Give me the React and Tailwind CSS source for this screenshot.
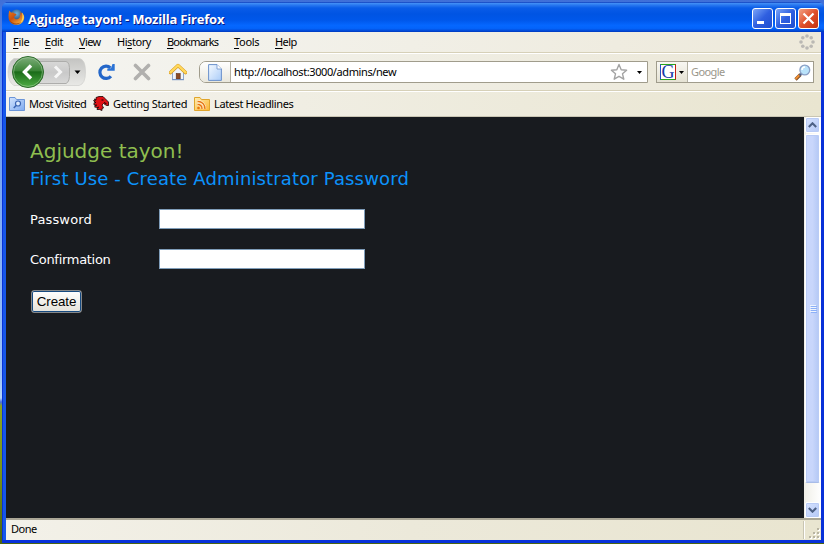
import React from "react";

const UI = "font-['Noto_Sans',sans-serif]";
const VERDANA = "font-['DejaVu_Sans',sans-serif]";

function FirefoxLogo() {
  return (
    <svg width="17" height="17" viewBox="0 0 17 17">
      <defs>
        <radialGradient id="globe" cx=".5" cy=".3" r=".6">
          <stop offset="0" stopColor="#6db4de" />
          <stop offset="1" stopColor="#1a3468" />
        </radialGradient>
        <linearGradient id="fox" x1="0" y1="0" x2=".8" y2="1">
          <stop offset="0" stopColor="#e57d1c" />
          <stop offset=".45" stopColor="#c9500f" />
          <stop offset="1" stopColor="#fbb83a" />
        </linearGradient>
      </defs>
      <circle cx="8.6" cy="7.4" r="6.8" fill="url(#globe)" />
      <path d="M1.200 1.600L3.200 3.800C4.600 3 5.500 3.600 6.400 4.400L8.600 5L7.200 7L6.200 7.400C5.800 9.400 7.400 10.600 9.400 10.200C11.600 9.800 12.400 7.800 11.600 5.800L12.600 6L12 3.400C13.600 3.600 14.600 4.400 15 5.200C16.400 7 16.400 8.400 16 10C15.200 13.600 12.400 15.800 8.400 15.800C4 15.800 .8 12.600 .6 8.400C.4 5.600 .9 3.600 1.200 1.600Z" fill="url(#fox)" />
      <path d="M14 3.600C17 7 16.400 11.400 12.600 13.800C14.400 11 15 7.400 14 3.600Z" fill="#fdd860" />
      <path d="M1.400 11C4 14.600 9.600 15.600 13 13C11 16.600 3.400 16.600 1.400 11Z" fill="#86300f" opacity=".7" />
    </svg>
  );
}

function CaptionButton({ kind }) {
  const tone =
    kind === "close"
      ? "from-[#f0a083] via-[#e0502c] to-[#c2320f]"
      : "from-[#7da4f7] via-[#2f5fe0] to-[#1f4ed0]";
  return (
    <div className={`flex h-[21px] w-[21px] items-center justify-center rounded-[3px] border border-white bg-linear-to-br ${tone}`}>
      <svg width="19" height="19" viewBox="0 0 19 19">
        {kind === "min" && <rect x="4" y="12" width="7" height="3" fill="#fff" />}
        {kind === "max" && (
          <path fillRule="evenodd" fill="#fff" d="M4 4H15V15H4Z M5 7V14H14V7Z" />
        )}
        {kind === "close" && (
          <path d="M4.500 4.500L14.500 14.500M14.500 4.500L4.500 14.500" stroke="#fff" strokeWidth="2.2" />
        )}
      </svg>
    </div>
  );
}

function TitleBar() {
  return (
    <div className="flex h-[30px] shrink-0 items-center rounded-t-[6px] bg-[linear-gradient(180deg,#0b36b4_0%,#3f8cf5_5%,#2a79f0_10%,#0a5ce8_20%,#0054e3_40%,#0057ea_60%,#0567ff_78%,#0464fb_88%,#0146d2_97%,#0036b8_100%)] pr-[5px] pl-[6px]">
      <div className="flex h-[30px] w-5 items-center">
        <FirefoxLogo />
      </div>
      <span className="pt-[3px] font-['Open_Sans',sans-serif] text-[13px] leading-[18px] font-bold tracking-[-0.2px] whitespace-nowrap text-white [text-shadow:1px_1px_0_#0a1883]">
        Agjudge tayon! - Mozilla Firefox
      </span>
      <div className="ml-auto flex gap-[2px] pt-[3px]">
        <CaptionButton kind="min" />
        <CaptionButton kind="max" />
        <CaptionButton kind="close" />
      </div>
    </div>
  );
}

const menus = [
  ["", "F", "ile", "w-8 tracking-[-0.3px]"],
  ["", "E", "dit", "w-[34px] tracking-[-0.4px]"],
  ["", "V", "iew", "w-[38px] tracking-[-0.6px]"],
  ["Hi", "s", "tory", "w-[50px] tracking-[-0.45px]"],
  ["", "B", "ookmarks", "w-[67px] tracking-[-0.8px]"],
  ["", "T", "ools", "w-[41px] tracking-[-0.3px]"],
  ["", "H", "elp", "w-[40px] tracking-[-0.6px]"],
];

const throbberDots = [
  [8, 2], [12.2, 3.8], [14, 8], [12.2, 12.2], [8, 14], [3.8, 12.2], [2, 8], [3.8, 3.8],
];

function MenuBar() {
  return (
    <div className="flex h-[21px] shrink-0 items-center border-b border-[#d6d0b8] bg-linear-to-r from-[#f5f5f2] to-[#ede9da] pl-[7px]">
      {menus.map(([before, key, after, style]) => (
        <div key={key + after} className={`${style} shrink-0 text-[11px] leading-[20px] whitespace-nowrap text-black`}>
          {before}
          <span className="underline underline-offset-2">{key}</span>
          {after}
        </div>
      ))}
      <svg className="mr-[6px] ml-auto" width="16" height="16" viewBox="0 0 16 16">
        {throbberDots.map(([x, y]) => (
          <circle key={`${x}-${y}`} cx={x} cy={y} r="1.8" fill="#bab8b4" />
        ))}
      </svg>
    </div>
  );
}

function BackForward() {
  return (
    <svg className="shrink-0" width="80" height="36" viewBox="0 0 80 36">
      <defs>
        <linearGradient id="tray" x1="0" y1="0" x2="0" y2="1">
          <stop offset="0" stopColor="#c4c4c2" />
          <stop offset="1" stopColor="#e9e9e6" />
        </linearGradient>
        <linearGradient id="fwd" x1="0" y1="0" x2="0" y2="1">
          <stop offset="0" stopColor="#d8d8d7" />
          <stop offset=".5" stopColor="#c9c9c9" />
          <stop offset="1" stopColor="#d9d9d8" />
        </linearGradient>
        <linearGradient id="back" x1="0" y1="0" x2="0" y2="1">
          <stop offset="0" stopColor="#7fae7c" />
          <stop offset=".45" stopColor="#3c8538" />
          <stop offset=".5" stopColor="#1b6c19" />
          <stop offset="1" stopColor="#4fae45" />
        </linearGradient>
      </defs>
      <path d="M8 4.500H73Q79.500 5 79.500 18Q79.500 30 73 31.500H8Q2 28 2 18Q2 8 8 4.500Z" fill="url(#tray)" stroke="#cfcfcc" strokeWidth=".7" />
      <path d="M30 7.500H60Q64 8 63.500 18Q64 28 60 29.500H30Z" fill="url(#fwd)" stroke="#adadab" />
      <path d="M49 12.500L54.500 18L49 23.500" fill="none" stroke="#f6f6f6" strokeWidth="3" />
      <circle cx="22" cy="18" r="15.500" fill="url(#back)" stroke="#2c6b2b" />
      <circle cx="22" cy="18" r="14.400" fill="none" stroke="#a5cba0" strokeWidth=".8" opacity=".7" />
      <path d="M25 11.500L18.500 18L25 24.500" fill="none" stroke="#fff" strokeWidth="3.400" />
      <path d="M68.500 16.500H74.500L71.500 20Z" fill="#000" />
    </svg>
  );
}

function ReloadIcon() {
  return (
    <svg className="shrink-0" width="17" height="18" viewBox="0 0 17 18">
      <path d="M12.900 13.200A6.200 6.200 0 1 1 12.400 4.800" fill="none" stroke="#2467c9" strokeWidth="3.200" />
      <path d="M16.700 1V7.800H9.300V5.500L13 5.200L14.500 1Z" fill="#2b73d6" />
    </svg>
  );
}

function StopIcon() {
  return (
    <svg className="shrink-0" width="18" height="18" viewBox="0 0 18 18">
      <path d="M2.500 2.500L15.500 15.500M15.500 2.500L2.500 15.500" stroke="#b1b0ae" strokeWidth="3.600" strokeLinecap="round" />
    </svg>
  );
}

function HomeIcon() {
  return (
    <svg className="shrink-0" width="18" height="18" viewBox="0 0 18 18">
      <path d="M3.500 9L9 4L14.500 9V16.500H3.500Z" fill="#eef4fc" stroke="#8fa6c8" />
      <path d="M1.500 9.600L9 2.600L16.500 9.600" fill="none" stroke="#d9981c" strokeWidth="3.400" strokeLinecap="round" strokeLinejoin="round" />
      <path d="M1.500 9.400L9 2.400L16.500 9.400" fill="none" stroke="#ffd95c" strokeWidth="2.300" strokeLinecap="round" strokeLinejoin="round" />
      <rect x="7.200" y="10.500" width="4" height="5.500" fill="#8a4a25" stroke="#62331a" strokeWidth=".6" />
      <path d="M3 16.700H15" stroke="#6f8fc4" />
    </svg>
  );
}

function PageIcon() {
  return (
    <svg width="14" height="17" viewBox="0 0 14 17">
      <defs>
        <linearGradient id="page" x1="0" y1="0" x2="1" y2="1">
          <stop offset="0" stopColor="#f5faff" />
          <stop offset="1" stopColor="#aaccf8" />
        </linearGradient>
      </defs>
      <path d="M.6 .6H9L13.400 5V16.400H.6Z" fill="url(#page)" stroke="#6b91cc" />
      <path d="M9 .6V5H13.400" fill="#fff" stroke="#6b91cc" strokeWidth=".8" />
    </svg>
  );
}

function DropArrow() {
  return (
    <svg className="shrink-0" width="5" height="3" viewBox="0 0 5 3">
      <path d="M0 0H5L2.500 3Z" fill="#000" />
    </svg>
  );
}

function GoogleIcon() {
  return (
    <div className="flex h-4 w-4 items-center justify-center border border-t-[#25a51d] border-r-[#c41c12] border-b-[#25a51d] border-l-[#2450c8] bg-white">
      <span className="font-['Liberation_Serif',serif] text-[18px] leading-[14px] text-[#1438a8]">G</span>
    </div>
  );
}

function Magnifier() {
  return (
    <svg className="shrink-0" width="17" height="17" viewBox="0 0 17 17">
      <path d="M1.500 15.500L6.500 10.500" stroke="#7b4a24" strokeWidth="3.200" />
      <path d="M1.500 15L6 10.500" stroke="#ef8d32" strokeWidth="2" />
      <path d="M5.500 11.500L7.500 9.500" stroke="#4d5f86" strokeWidth="2" />
      <circle cx="10.800" cy="6" r="4.900" fill="#b9e2fa" stroke="#8a9fc4" strokeWidth="1.300" />
      <path d="M8 6A3 3 0 0 1 11 3" fill="none" stroke="#fff" strokeWidth="1.500" />
    </svg>
  );
}

function NavBar() {
  return (
    <div className="flex h-[38px] shrink-0 items-center border-t border-b border-t-white border-b-[#d6d0b8] bg-linear-to-r from-[#f5f5f2] to-[#ebe7d6]">
      <BackForward />
      <div className="ml-[12px] flex items-center gap-[18px]">
        <ReloadIcon />
        <StopIcon />
        <HomeIcon />
      </div>
      <div className="ml-[12px] flex h-[22px] w-[449px] shrink-0 items-center overflow-hidden rounded-l-[7px] border border-[#a09c8c] bg-white">
        <div className="flex h-full w-[31px] shrink-0 items-center justify-center border-r border-[#b4b1a2] bg-linear-to-b from-white to-[#e9e7dc]">
          <PageIcon />
        </div>
        <span className="pt-px pl-[3px] text-[11px] tracking-[-0.4px] whitespace-nowrap text-black">http://localhost:3000/admins/new</span>
        <svg className="mr-[9px] ml-auto shrink-0" width="18" height="18" viewBox="0 0 18 18">
          <path d="M9 1.500L11.200 6.700L16.600 7.200L12.500 10.800L13.800 16.200L9 13.300L4.200 16.200L5.500 10.800L1.400 7.200L6.800 6.700Z" fill="#fff" stroke="#a3a3a3" strokeWidth="1.400" strokeLinejoin="round" />
        </svg>
        <div className="mr-[5px]"><DropArrow /></div>
      </div>
      <div className="ml-[8px] flex h-[22px] w-[158px] shrink-0 items-center border border-[#a09c8c] bg-white">
        <div className="flex h-full w-[31px] shrink-0 items-center gap-[3px] border-r border-[#b4b1a2] bg-linear-to-b from-[#f8f7f2] to-[#e5e2d3] pl-[3px]">
          <GoogleIcon />
          <DropArrow />
        </div>
        <span className="pt-px pl-[3px] text-[11px] tracking-[-0.6px] text-[#9a978b]">Google</span>
        <div className="mr-[2px] ml-auto"><Magnifier /></div>
      </div>
    </div>
  );
}

function Folder({ fill, edge, children }) {
  return (
    <svg className="shrink-0" width="16" height="16" viewBox="0 0 16 16">
      <defs>
        <linearGradient id="folder-blue" x1="0" y1="0" x2="1" y2="1">
          <stop offset="0" stopColor="#d3e4fd" />
          <stop offset="1" stopColor="#7eaaf0" />
        </linearGradient>
        <linearGradient id="folder-gold" x1="0" y1="0" x2="1" y2="1">
          <stop offset="0" stopColor="#ffeeb0" />
          <stop offset="1" stopColor="#fbb534" />
        </linearGradient>
      </defs>
      <path d="M.5 1.500H6L7.500 3.500H15.500V14.500H.5Z" fill={fill} stroke={edge} />
      {children}
    </svg>
  );
}

function BookmarksBar() {
  const label = "pt-px pl-1 text-[11px] whitespace-nowrap text-black";
  return (
    <div className="flex h-[26px] shrink-0 items-center border-t border-b border-t-white border-b-[#c9c5b3] bg-linear-to-r from-[#f4f3ee] to-[#e9e5d0] pl-[3px]">
      <div className="flex w-[84px] shrink-0 items-center">
        <Folder fill="url(#folder-blue)" edge="#6b95d8">
          <circle cx="9" cy="7.500" r="2.500" fill="#dceafd" stroke="#3c66b4" strokeWidth="1.200" />
          <path d="M7.300 9.300L4.800 12" stroke="#3c66b4" strokeWidth="1.600" />
        </Folder>
        <span className={`${label} tracking-[-0.5px]`}>Most Visited</span>
      </div>
      <div className="flex w-[101px] shrink-0 items-center">
        <svg className="shrink-0" width="16" height="16" viewBox="0 0 16 16">
          <path d="M3 1.500L6 .5H10L12 2.500L15.500 6L15.500 9.500L13.500 9.500L10.500 7.500L9 9L10.500 12L9 12.500L9 14.500L6.500 13.500L4 13.500L4.500 11.500L1.500 11L3 9.500L.5 8L2.500 6.500L.5 4.500L3 4Z" fill="#e01014" stroke="#160505" strokeWidth=".8" />
          <path d="M1 3L3 4M.8 6L3 6.500M1.500 9.500L4 9M4 12L6 11M8.500 4H10.500M11 6.500L13.500 7.800" stroke="#160505" strokeWidth="1" />
        </svg>
        <span className={`${label} tracking-[-0.33px]`}>Getting Started</span>
      </div>
      <div className="flex items-center">
        <Folder fill="url(#folder-gold)" edge="#e0a52c">
          <circle cx="4.500" cy="12" r="1.300" fill="#e8770f" />
          <path d="M3.500 8.500A4 4 0 0 1 8 13M3.500 5.500A7 7 0 0 1 11 13" fill="none" stroke="#fff" strokeWidth="2.400" />
          <path d="M3.500 8.500A4 4 0 0 1 8 13M3.500 5.500A7 7 0 0 1 11 13" fill="none" stroke="#e8770f" strokeWidth="1.500" />
        </Folder>
        <span className={`${label} tracking-[-0.38px]`}>Latest Headlines</span>
      </div>
    </div>
  );
}

function ScrollButton({ up }) {
  return (
    <div className="flex h-4 w-[15px] shrink-0 items-center justify-center rounded-[2px] border border-white bg-linear-to-br from-[#d6e2fe] to-[#b5c9f7] shadow-[inset_0_0_0_1px_#b9cbf5]">
      <svg width="9" height="6" viewBox="0 0 9 6">
        <path d={up ? "M.8 5L4.500 1.300L8.200 5" : "M.8 1L4.500 4.700L8.200 1"} fill="none" stroke="#4d6185" strokeWidth="2.100" />
      </svg>
    </div>
  );
}

function Scrollbar() {
  return (
    <div className="flex w-[17px] shrink-0 flex-col items-center bg-linear-to-r from-[#f0efe8] to-white">
      <ScrollButton up />
      <div className="mt-px flex h-[349px] w-[15px] flex-col items-center justify-center gap-px rounded-[2px] border border-white border-b-[#a8bce8] bg-linear-to-r from-[#c9d7fd] via-[#c8d6fb] to-[#b3c8f5] shadow-[inset_0_0_0_1px_#b9cbf5]">
        <div className="h-px w-[6px] bg-[#eef4fe] shadow-[1px_1px_0_#8cb0f8]" />
        <div className="h-px w-[6px] bg-[#eef4fe] shadow-[1px_1px_0_#8cb0f8]" />
        <div className="h-px w-[6px] bg-[#eef4fe] shadow-[1px_1px_0_#8cb0f8]" />
        <div className="h-px w-[6px] bg-[#eef4fe] shadow-[1px_1px_0_#8cb0f8]" />
      </div>
      <div className="mt-auto"><ScrollButton /></div>
    </div>
  );
}

function Field({ label, spacing }) {
  return (
    <div className="flex h-5 items-center">
      <label className={`w-[129px] shrink-0 pt-[2px] text-[13px] leading-[18px] text-white ${spacing}`}>{label}</label>
      <input type="password" className="h-5 w-[206px] border border-[#7f9db9] bg-white outline-none" />
    </div>
  );
}

function Page() {
  return (
    <div className={`flex-1 bg-[#181b1f] pt-5 pl-6 ${VERDANA}`}>
      <h1 className="text-[20px] leading-[28px] whitespace-nowrap text-[#8fbf4f]">Agjudge tayon!</h1>
      <h2 className="text-[18px] leading-[28px] tracking-[0.14px] whitespace-nowrap text-[#0c93fb]">First Use - Create Administrator Password</h2>
      <div className="mt-4 flex flex-col gap-5">
        <Field label="Password" spacing="tracking-[0.15px]" />
        <Field label="Confirmation" spacing="tracking-[-0.3px]" />
      </div>
      <button className="mt-[21px] ml-px flex h-[23px] w-[51px] items-center justify-center rounded-[3px] border border-[#85888a] bg-linear-to-b from-white to-[#e4e2d9] font-['Liberation_Sans',sans-serif] text-[13.33px] tracking-[-0.1px] text-black shadow-[inset_0_0_0_1px_#164a80]">
        Create
      </button>
    </div>
  );
}

function StatusBar() {
  return (
    <div className="flex h-[22px] shrink-0 items-center border-t-2 border-[#aaa796] bg-linear-to-r from-[#f3f1e9] via-[#ece9da] to-[#e9e5d0]">
      <span className="pb-[2px] pl-[5px] text-[11px] tracking-[-0.5px] text-black">Done</span>
      <div className="ml-auto h-[18px] w-[2px] border-l border-[#c9c5b2] bg-white" />
      <svg className="ml-[3px] self-end" width="13" height="13" viewBox="0 0 13 13">
        <path d="M9 1h2v2h-2zM5 5h2v2h-2zM9 5h2v2h-2zM1 9h2v2h-2zM5 9h2v2h-2zM9 9h2v2h-2z" fill="#fff" transform="translate(1 1)" />
        <path d="M9 1h2v2h-2zM5 5h2v2h-2zM9 5h2v2h-2zM1 9h2v2h-2zM5 9h2v2h-2zM9 9h2v2h-2z" fill="#b8b4a2" />
      </svg>
    </div>
  );
}

export default function App() {
  return (
    <div className={`flex h-[544px] w-[824px] flex-col overflow-hidden bg-[linear-gradient(180deg,#3f6fd8_0px,#5d8ff0_60px,#7eaaf5_200px,#9cc3fa_375px,#b5d5f8_398px,#4a6ee0_402px,#8ba51f_406px,#7a9514_470px,#4c6410_544px)] pt-[2px] pl-[2px] ${UI}`}>
      <div className="flex h-[541px] w-[822px] flex-col rounded-t-[7px] bg-[#0831d9]">
        <TitleBar />
        <div className="mr-[3px] ml-px flex h-[508px] flex-col border-l-[3px] border-[#1657e8]">
          <MenuBar />
          <NavBar />
          <BookmarksBar />
          <div className="flex min-h-0 flex-1">
            <Page />
            <Scrollbar />
          </div>
          <StatusBar />
        </div>
      </div>
    </div>
  );
}
